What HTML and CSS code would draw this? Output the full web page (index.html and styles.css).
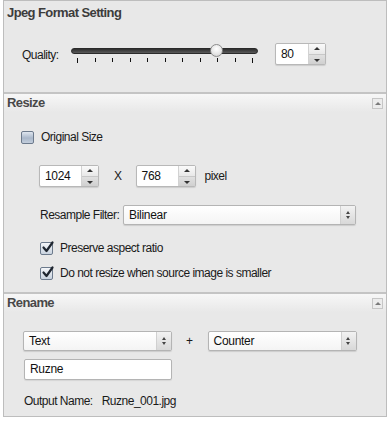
FILE: index.html
```html
<!DOCTYPE html>
<html>
<head>
<meta charset="utf-8">
<link rel="stylesheet" href="styles.css">
</head>
<body>
<div class="panel">
  <section class="sec sec-jpeg">
    <div class="head flat"><span class="title">Jpeg Format Setting</span></div>
    <div class="body jpeg-body">
      <div class="quality-row">
        <span class="lbl q-lbl">Quality:</span>
        <div class="slider">
          <div class="track"><div class="thumb"></div></div>
          <div class="ticks">
            <i class="tall"></i><i></i><i></i><i></i><i></i><i></i><i></i><i></i><i></i><i></i><i class="tall"></i>
          </div>
        </div>
        <div class="spin q-spin"><span class="val">80</span><span class="btns"><b class="up"></b><b class="dn"></b></span></div>
      </div>
    </div>
  </section>

  <section class="sec">
    <div class="head grad"><span class="title">Resize</span><span class="collapse"></span></div>
    <div class="body resize-body">
      <div class="row orig-row">
        <span class="cb off"></span><span class="lbl">Original Size</span>
      </div>
      <div class="row dim-row">
        <div class="spin dim"><span class="val">1024</span><span class="btns"><b class="up"></b><b class="dn"></b></span></div>
        <span class="lbl x">X</span>
        <div class="spin dim"><span class="val">768</span><span class="btns"><b class="up"></b><b class="dn"></b></span></div>
        <span class="lbl px">pixel</span>
      </div>
      <div class="row filter-row">
        <span class="lbl filter-lbl">Resample Filter:</span>
        <div class="select filter-sel"><span class="val">Bilinear</span><span class="arr"><b class="up"></b><b class="dn"></b></span></div>
      </div>
      <div class="row chk-row chk1">
        <span class="cb on"><svg width="13" height="13" viewBox="0 0 13 13"><path d="M2.5 6.5 L5.5 10 L11.5 1.5" fill="none" stroke="#1f2630" stroke-width="2.2" stroke-linecap="round" stroke-linejoin="round"/></svg></span><span class="lbl">Preserve aspect ratio</span>
      </div>
      <div class="row chk-row chk2">
        <span class="cb on"><svg width="13" height="13" viewBox="0 0 13 13"><path d="M2.5 6.5 L5.5 10 L11.5 1.5" fill="none" stroke="#1f2630" stroke-width="2.2" stroke-linecap="round" stroke-linejoin="round"/></svg></span><span class="lbl">Do not resize when source image is smaller</span>
      </div>
    </div>
  </section>

  <section class="sec">
    <div class="head grad"><span class="title">Rename</span><span class="collapse"></span></div>
    <div class="body rename-body">
      <div class="row sel-row">
        <div class="select name-sel"><span class="val">Text</span><span class="arr"><b class="up"></b><b class="dn"></b></span></div>
        <span class="lbl plus">+</span>
        <div class="select name-sel"><span class="val">Counter</span><span class="arr"><b class="up"></b><b class="dn"></b></span></div>
      </div>
      <div class="row input-row">
        <div class="input">Ruzne</div>
      </div>
      <div class="row out-row">
        <span class="lbl">Output Name:</span><span class="lbl out-val">Ruzne_001.jpg</span>
      </div>
    </div>
  </section>
</div>
</body>
</html>
```

FILE: styles.css
```css
* { box-sizing: border-box; }
html, body { margin: 0; padding: 0; background: #ffffff; }
body {
  font-family: "Liberation Sans", Arial, sans-serif;
  font-size: 12px;
  letter-spacing: -0.5px;
  color: #1a1a1a;
  width: 390px;
  height: 422px;
  overflow: hidden;
}
.panel {
  margin-left: 3px;
  width: 384px;
  height: 417px;
  border: 1px solid #bdbdbd;
  background: #e8e8e8;
  display: flex;
  flex-direction: column;
}
.sec { display: flex; flex-direction: column; }
.sec + .sec { border-top: 2px solid #c4c4c4; }
.head {
  height: 18px;
  display: flex;
  align-items: center;
  justify-content: space-between;
  padding: 0 3px 0 3px;
}
.head.flat { height: 22px; padding-top: 1px; }
.head.grad { background: linear-gradient(#f7f7f7, #e8e8e8); }
.title {
  font-weight: bold;
  font-size: 13px;
  letter-spacing: -0.6px;
  color: #484848;
  line-height: 16px;
}
.sec-jpeg .title { color: #3c3c3c; }
.collapse {
  width: 11px;
  height: 11px;
  border: 1px solid #c6c6c6;
  background: #ececec;
  position: relative;
  margin-top: 1px;
}
.collapse::after {
  content: "";
  position: absolute;
  left: 2px;
  top: 3px;
  border-left: 3px solid transparent;
  border-right: 3px solid transparent;
  border-bottom: 3px solid #7a7a7a;
}
.lbl { line-height: 16px; white-space: nowrap; }
.row { display: flex; align-items: center; }

/* Jpeg */
.jpeg-body { height: 69px; padding-top: 20px; }
.quality-row { display: flex; align-items: flex-start; height: 22px; }
.q-lbl { margin-left: 18px; margin-top: 4px; width: 49px; }
.slider { width: 187px; margin-top: 5px; position: relative; }
.track {
  height: 6px;
  border-radius: 3px;
  background: linear-gradient(#2e2e2e, #5a5a5a);
  border: 1px solid #2a2a2a;
  position: relative;
}
.thumb {
  position: absolute;
  left: 138px;
  top: -5px;
  width: 13px;
  height: 13px;
  border-radius: 50%;
  background: radial-gradient(circle at 50% 35%, #ffffff, #e4e4e4 60%, #c4c4c4);
  border: 1px solid #8c8c8c;
}
.ticks {
  display: flex;
  justify-content: space-between;
  padding: 0 5px 0 6px;
  margin-top: 3px;
  height: 6px;
  align-items: flex-start;
}
.ticks i { display: block; width: 1px; height: 4px; background: #111; margin-top: 1px; }
.ticks i.tall { height: 5px; }
.q-spin { margin-left: 17px; width: 51px; }

/* spinner */
.spin {
  display: flex;
  height: 22px;
  border: 1px solid #b8b8b8;
  border-radius: 2px;
  background: #fff;
  box-shadow: 0 1px 1px rgba(0,0,0,0.12);
}
.spin .val { flex: 1; padding-left: 5px; line-height: 20px; color: #111; letter-spacing: -0.3px; }
.spin .btns {
  width: 17px;
  display: flex;
  flex-direction: column;
  border-left: 1px solid #d2d2d2;
  background: linear-gradient(#f6f6f6, #dcdcdc);
}
.spin .btns b {
  flex: 1;
  position: relative;
  display: block;
}
.spin .btns b.up { border-bottom: 1px solid #c8c8c8; background: linear-gradient(#fafafa, #e8e8e8); }
.spin .btns b.dn { background: linear-gradient(#e0e0e0, #d0d0d0); }
.spin .btns b::after, .select .arr b::after {
  content: "";
  position: absolute;
  left: 50%;
  margin-left: -3px;
  border-left: 3px solid transparent;
  border-right: 3px solid transparent;
}
.spin .btns b.up::after { top: 3px; border-bottom: 3px solid #333; }
.spin .btns b.dn::after { top: 4px; border-top: 3px solid #333; }

/* Resize */
.resize-body { height: 180px; padding-left: 17px; }
.orig-row { margin-top: 18px; height: 14px; }
.cb {
  width: 13px;
  height: 13px;
  border-radius: 2px;
  border: 1px solid #6c7a8c;
  margin-right: 7px;
  flex: none;
  position: relative;
}
.cb.off { background: linear-gradient(#dfe6ef, #a9b7ca 55%, #c3cedc); }
.cb.on { background: linear-gradient(#f4f6f9, #c9d3df); }
.cb svg { position: absolute; left: 0; top: -2px; width: 13px; height: 13px; overflow: visible; }
.dim-row { margin-top: 21px; padding-left: 18px; height: 22px; }
.dim { width: 60px; }
.x { margin: 0 14px 0 15px; }
.px { margin-left: 9px; }
.filter-row { margin-top: 18px; padding-left: 19px; height: 20px; }
.filter-lbl { width: 83px; }
.select {
  display: flex;
  height: 20px;
  border: 1px solid #b4b4b4;
  border-radius: 2px;
  background: linear-gradient(#ffffff, #f4f4f4);
  box-shadow: 0 1px 1px rgba(0,0,0,0.12);
}
.select .val { flex: 1; padding-left: 5px; line-height: 18px; color: #111; letter-spacing: -0.3px; }
.select .arr {
  width: 15px;
  border-left: 1px solid #d0d0d0;
  background: linear-gradient(#f2f2f2, #d8d8d8);
  position: relative;
}
.select .arr b { position: absolute; left: 0; right: 0; display: block; }
.select .arr b::after { border-left-width: 2.5px; border-right-width: 2.5px; margin-left: -2.5px; }
.select .arr b.up::after { top: 5px; border-bottom: 3px solid #444; }
.select .arr b.dn::after { top: 10px; border-top: 3px solid #444; }
.filter-sel { width: 233px; }
.chk-row { padding-left: 19px; height: 14px; }
.chk1 { margin-top: 16px; }
.chk2 { margin-top: 11px; }

/* Rename */
.rename-body { padding-left: 19px; height: 105px; }
.sel-row { margin-top: 19px; height: 20px; }
.name-sel { width: 149px; }
.plus { margin: 0 15px 0 14px; }
.input-row { margin-top: 8px; padding-left: 1px; }
.input {
  width: 148px;
  height: 21px;
  border: 1px solid #b4b4b4;
  border-radius: 2px;
  background: #fff;
  padding-left: 5px;
  line-height: 19px;
  color: #111;
  letter-spacing: -0.3px;
  box-shadow: 0 1px 1px rgba(0,0,0,0.08);
}
.out-row { margin-top: 13px; padding-left: 1px; height: 16px; }
.out-val { margin-left: 9px; }
```
